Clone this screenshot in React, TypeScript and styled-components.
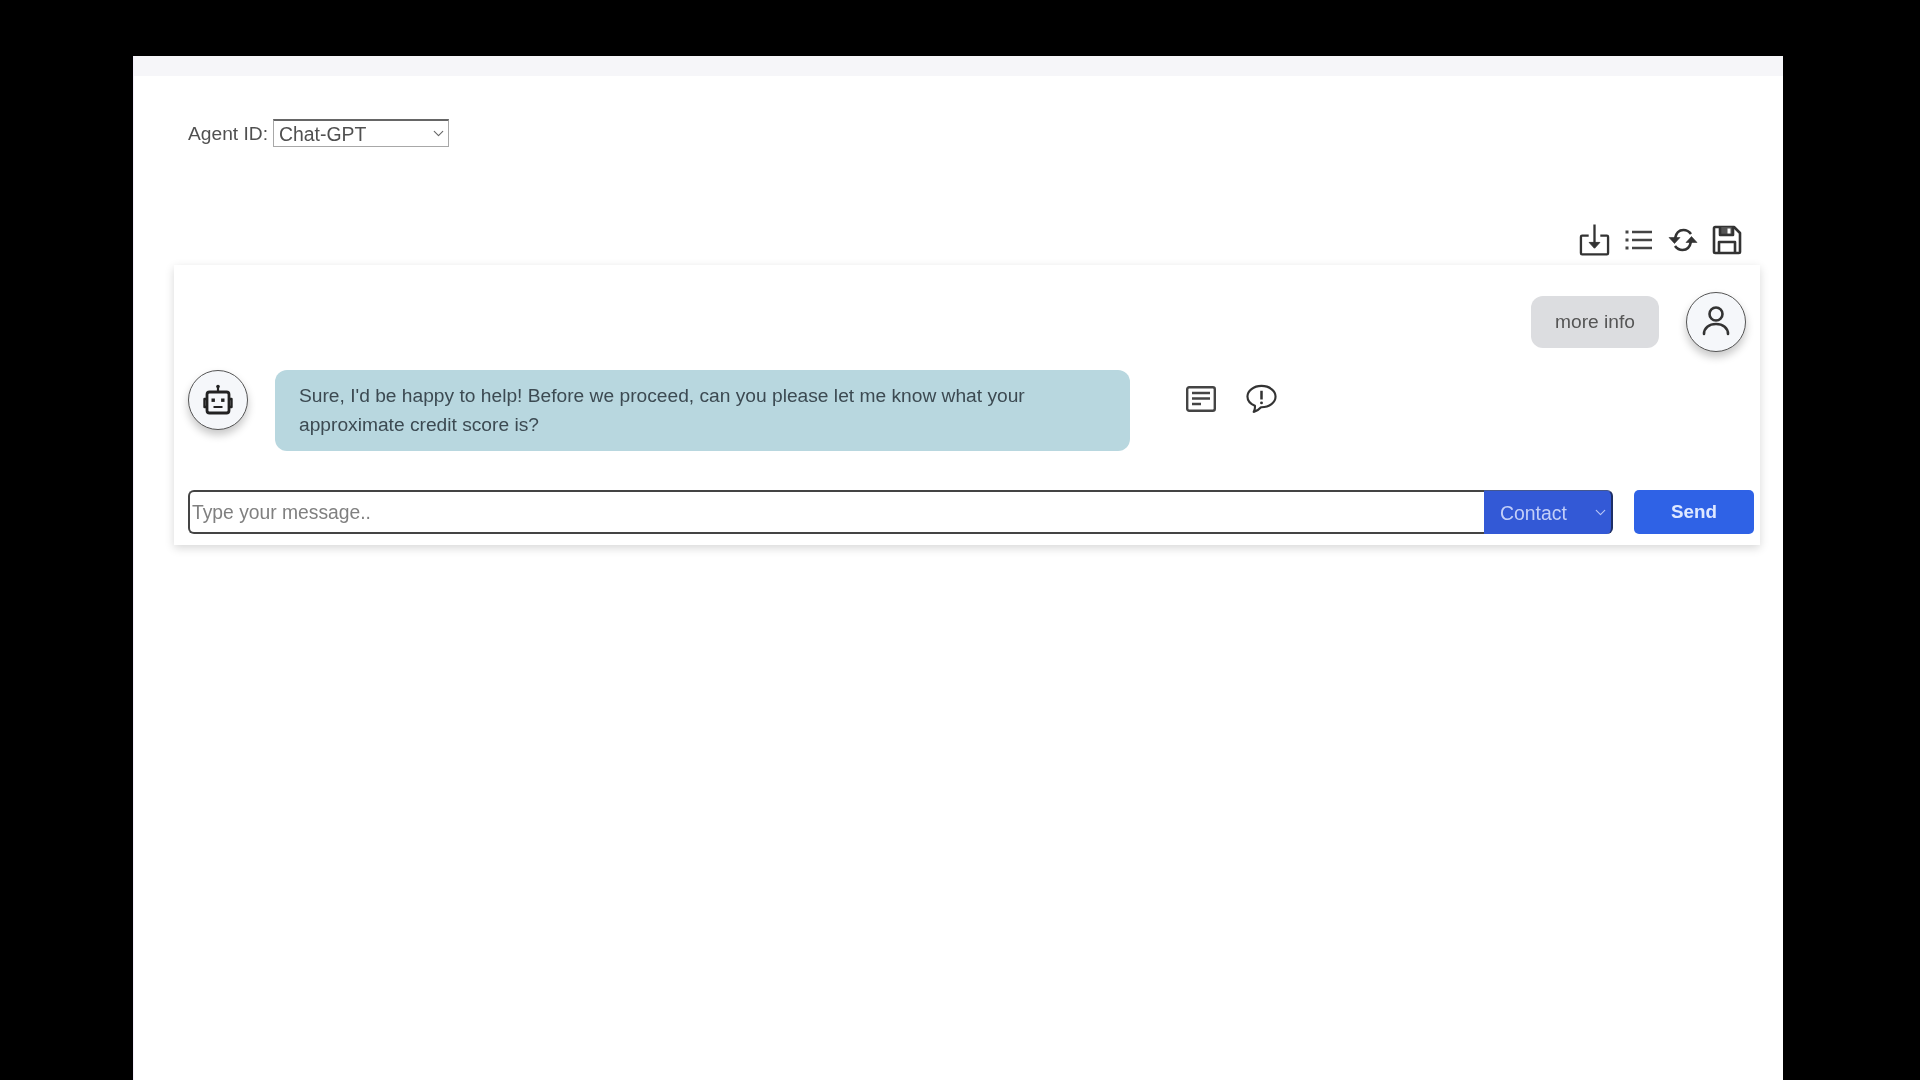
import styled, { createGlobalStyle } from "styled-components";
import { ChevronDown } from "lucide-react";

const GlobalStyle = createGlobalStyle`
  html, body {
    margin: 0;
    padding: 0;
    height: 100%;
    background: #000;
    overflow: hidden;
    font-family: "Liberation Sans", Arial, sans-serif;
  }
`;

const DownloadIcon = () => (
  <svg width="32" height="34" viewBox="0 0 32 34" fill="none" stroke="#333" strokeWidth="2.4" strokeLinejoin="round">
    <path d="M10 12.5H3.2a1.2 1.2 0 0 0-1.2 1.2v17a1.2 1.2 0 0 0 1.2 1.2h25.6a1.2 1.2 0 0 0 1.2-1.2v-17a1.2 1.2 0 0 0-1.2-1.2H22" />
    <path d="M16 1v21" />
    <path d="M10.5 19.5h11L16 25.5z" fill="#333" strokeWidth="1" />
  </svg>
);

const ListIcon = () => (
  <svg width="28" height="24" viewBox="0 0 28 24" fill="none" stroke="#444" strokeWidth="2.6">
    <path d="M7 4h20M7 12h20M7 20h20" />
    <path d="M0.5 4h3M0.5 12h3M0.5 20h3" strokeWidth="2.8" />
  </svg>
);

const RefreshIcon = () => (
  <svg width="30" height="26" viewBox="0 0 30 26" fill="none" stroke="#333" strokeWidth="2.6">
    <path d="M7 11.5C8 6 11.500 3 15.500 3c3 0 5.500 1.300 7.500 4" />
    <path d="M23 14.500C22 20 18.500 23 14.500 23c-3 0-5.500-1.300-7.500-4" />
    <path d="M1 10.500h11L6.500 16.500z" fill="#333" strokeWidth="0.6" />
    <path d="M29 15.500H18L23.500 9.500z" fill="#333" strokeWidth="0.6" />
  </svg>
);

const SaveIcon = () => (
  <svg width="30" height="30" viewBox="0 0 30 30" fill="none" stroke="#333" strokeWidth="2.6" strokeLinejoin="round">
    <path d="M2 3.200A1.200 1.200 0 0 1 3.200 2H22l6 6v18.800a1.200 1.200 0 0 1-1.200 1.200H3.200A1.200 1.200 0 0 1 2 26.800z" />
    <path d="M8 2v8h13V2" fill="#555" />
    <path d="M15.500 3.500v5h3v-5z" fill="#fff" strokeWidth="0" />
    <path d="M7 28V17h16v11" />
  </svg>
);

const UserIcon = () => (
  <svg width="30" height="34" viewBox="0 0 30 34" fill="none" stroke="#333" strokeWidth="2.6" strokeLinecap="round">
    <circle cx="15" cy="9" r="6.500" />
    <path d="M3 29c0-6 5-10 12-10s12 4 12 10" />
  </svg>
);

const BotIcon = () => (
  <svg width="32" height="32" viewBox="0 0 32 32" fill="none" stroke="#222" strokeWidth="2.8" strokeLinejoin="round">
    <circle cx="16" cy="2.500" r="1.800" fill="#222" stroke="none" />
    <path d="M16 3v5" strokeWidth="2.200" />
    <rect x="5" y="8" width="22" height="21" rx="2.500" />
    <path d="M4 15H2.500v8H4M28 15h1.500v8H28" strokeWidth="2.400" />
    <rect x="9.500" y="14.500" width="3.400" height="3.400" fill="#222" stroke="none" />
    <rect x="19.100" y="14.500" width="3.400" height="3.400" fill="#222" stroke="none" />
    <path d="M11.500 23h9" strokeWidth="2" />
  </svg>
);

const NoteIcon = () => (
  <svg width="30" height="26" viewBox="0 0 30 26" fill="none" stroke="#444" strokeWidth="2.400">
    <rect x="1.200" y="1.200" width="27.600" height="23.600" rx="2" />
    <path d="M6 7h18M6 12.500h18M6 18h9" />
  </svg>
);

const AlertChatIcon = () => (
  <svg width="32" height="30" viewBox="0 0 32 30" fill="none" stroke="#333" strokeWidth="2.200">
    <path d="M16 1.500C7.800 1.500 1.500 6.500 1.500 12.500c0 4.300 3 7.600 7.700 9.500.3 2.500-.2 4.500-1.200 6.300 3-.8 5.500-2.500 7.500-4.800h.5c8.200 0 14.500-4.900 14.500-11S24.200 1.500 16 1.500z" strokeLinejoin="round" />
    <path d="M16 6.500v9" strokeWidth="2.600" />
    <circle cx="16" cy="19" r="1.500" fill="#333" stroke="none" />
  </svg>
);

export default function App() {
  return (
    <>
      <GlobalStyle />
      <Screen>
        <TopStrip />
        <AgentRow>
          <AgentLabel htmlFor="agent">Agent ID:</AgentLabel>
          <AgentSelectWrap>
            <AgentSelect id="agent" defaultValue="Chat-GPT">
              <option>Chat-GPT</option>
            </AgentSelect>
            <SelectChevron>
              <ChevronDown size={17} strokeWidth={1.6} color="#666" />
            </SelectChevron>
          </AgentSelectWrap>
        </AgentRow>
        <Toolbar>
          <ToolButton><DownloadIcon /></ToolButton>
          <ToolButton><ListIcon /></ToolButton>
          <ToolButton><RefreshIcon /></ToolButton>
          <ToolButton><SaveIcon /></ToolButton>
        </Toolbar>
        <ChatCard>
          <UserRow>
            <UserBubble>more info</UserBubble>
            <Avatar><UserIcon /></Avatar>
          </UserRow>
          <BotRow>
            <Avatar><BotIcon /></Avatar>
            <BotBubble>
              Sure, I'd be happy to help! Before we proceed, can you please let me know what your approximate credit score is?
            </BotBubble>
            <BubbleActions>
              <ActionButton><NoteIcon /></ActionButton>
              <ActionButton><AlertChatIcon /></ActionButton>
            </BubbleActions>
          </BotRow>
          <Composer>
            <InputGroup>
              <MessageInput placeholder="Type your message.." />
              <ContactWrap>
                <ContactSelect defaultValue="Contact">
                  <option>Contact</option>
                </ContactSelect>
                <ContactChevron>
                  <ChevronDown size={17} strokeWidth={1.6} color="#b9c6f6" />
                </ContactChevron>
              </ContactWrap>
            </InputGroup>
            <SendButton>Send</SendButton>
          </Composer>
        </ChatCard>
      </Screen>
    </>
  );
}

const Screen = styled.div`
  width: 1650px;
  height: 1024px;
  margin: 56px 0 0 133px;
  background: #fff;
  box-sizing: border-box;
  border-left: 1px solid #f3eefb;
  filter: blur(0.45px);
`;

const TopStrip = styled.div`
  height: 20px;
  background: #f6f6f9;
`;

const AgentRow = styled.div`
  display: flex;
  align-items: center;
  gap: 5px;
  height: 28px;
  margin-top: 43px;
  padding-left: 54px;
`;

const AgentLabel = styled.label`
  padding-top: 1px;
  font-size: 19.2px;
  color: #505050;
`;

const AgentSelectWrap = styled.div`
  position: relative;
  width: 176px;
  height: 28px;
`;

const AgentSelect = styled.select`
  appearance: none;
  width: 100%;
  height: 100%;
  box-sizing: border-box;
  border: 1px solid #a8a8a8;
  border-top: 2px solid #666;
  border-radius: 0;
  background: #fff;
  padding: 0 0 0 5px;
  font-family: inherit;
  font-size: 19.4px;
  color: #505050;
`;

const SelectChevron = styled.span`
  position: absolute;
  top: 6px;
  right: 2px;
  display: flex;
  pointer-events: none;
`;

const Toolbar = styled.div`
  display: flex;
  align-items: center;
  justify-content: flex-end;
  gap: 13px;
  height: 36px;
  margin-top: 75px;
  padding-right: 41px;
`;

const ToolButton = styled.div`
  display: flex;
  align-items: center;
  justify-content: center;
  width: 31px;
  height: 36px;
`;

const ChatCard = styled.div`
  box-sizing: border-box;
  width: 1586px;
  height: 280px;
  margin: 7px 0 0 40px;
  padding-top: 27px;
  background: #fff;
  box-shadow: 0 3px 9px rgba(0, 0, 0, 0.16);
`;

const UserRow = styled.div`
  display: flex;
  align-items: center;
  justify-content: flex-end;
  gap: 27px;
  padding-right: 14px;
`;

const UserBubble = styled.div`
  display: flex;
  align-items: center;
  justify-content: center;
  width: 128px;
  height: 52px;
  border-radius: 12px;
  background: #dcdde0;
  font-size: 19.2px;
  color: #555;
`;

const Avatar = styled.div`
  flex: none;
  display: flex;
  align-items: center;
  justify-content: center;
  box-sizing: border-box;
  width: 60px;
  height: 60px;
  border-radius: 50%;
  border: 1px solid #555;
  background: #f5f7fa;
  box-shadow: 0 5px 9px rgba(0, 0, 0, 0.22);
`;

const BotRow = styled.div`
  display: flex;
  align-items: flex-start;
  gap: 27px;
  margin-top: 18px;
  padding-left: 14px;
`;

const BotBubble = styled.div`
  box-sizing: border-box;
  width: 855px;
  height: 81px;
  padding: 11px 90px 0 24px;
  border-radius: 12px;
  background: #b8d7df;
  font-size: 19.2px;
  line-height: 29px;
  color: #3c4a52;
`;

const BubbleActions = styled.div`
  display: flex;
  align-items: center;
  gap: 30px;
  margin: 14px 0 0 28px;
`;

const ActionButton = styled.div`
  display: flex;
  align-items: center;
  justify-content: center;
  width: 31px;
  height: 30px;
`;

const Composer = styled.div`
  display: flex;
  align-items: stretch;
  gap: 21px;
  height: 44px;
  margin-top: 39px;
  padding-left: 14px;
`;

const InputGroup = styled.div`
  display: flex;
  width: 1425px;
`;

const MessageInput = styled.input`
  flex: 1;
  min-width: 0;
  box-sizing: border-box;
  border: 2px solid #444;
  border-right: none;
  border-radius: 6px 0 0 6px;
  outline: none;
  padding: 2px 0 0 2px;
  font-family: inherit;
  font-size: 19.3px;
  color: #444;
  &::placeholder {
    color: #808080;
    opacity: 1;
  }
`;

const ContactWrap = styled.div`
  position: relative;
  width: 129px;
`;

const ContactSelect = styled.select`
  appearance: none;
  width: 100%;
  height: 100%;
  box-sizing: border-box;
  border: none;
  border-top: 1px solid #44578f;
  border-right: 2px solid #1e2f66;
  border-radius: 0 6px 6px 0;
  background: #3359d6;
  padding: 0 0 0 16px;
  font-family: inherit;
  font-size: 19.4px;
  color: #c3cff8;
`;

const ContactChevron = styled.span`
  position: absolute;
  top: 14px;
  right: 4px;
  display: flex;
  pointer-events: none;
`;

const SendButton = styled.button`
  width: 120px;
  border: none;
  border-radius: 5px;
  background: #2f62e6;
  font-family: inherit;
  font-size: 18.8px;
  font-weight: 700;
  color: #dfe8ff;
`;
